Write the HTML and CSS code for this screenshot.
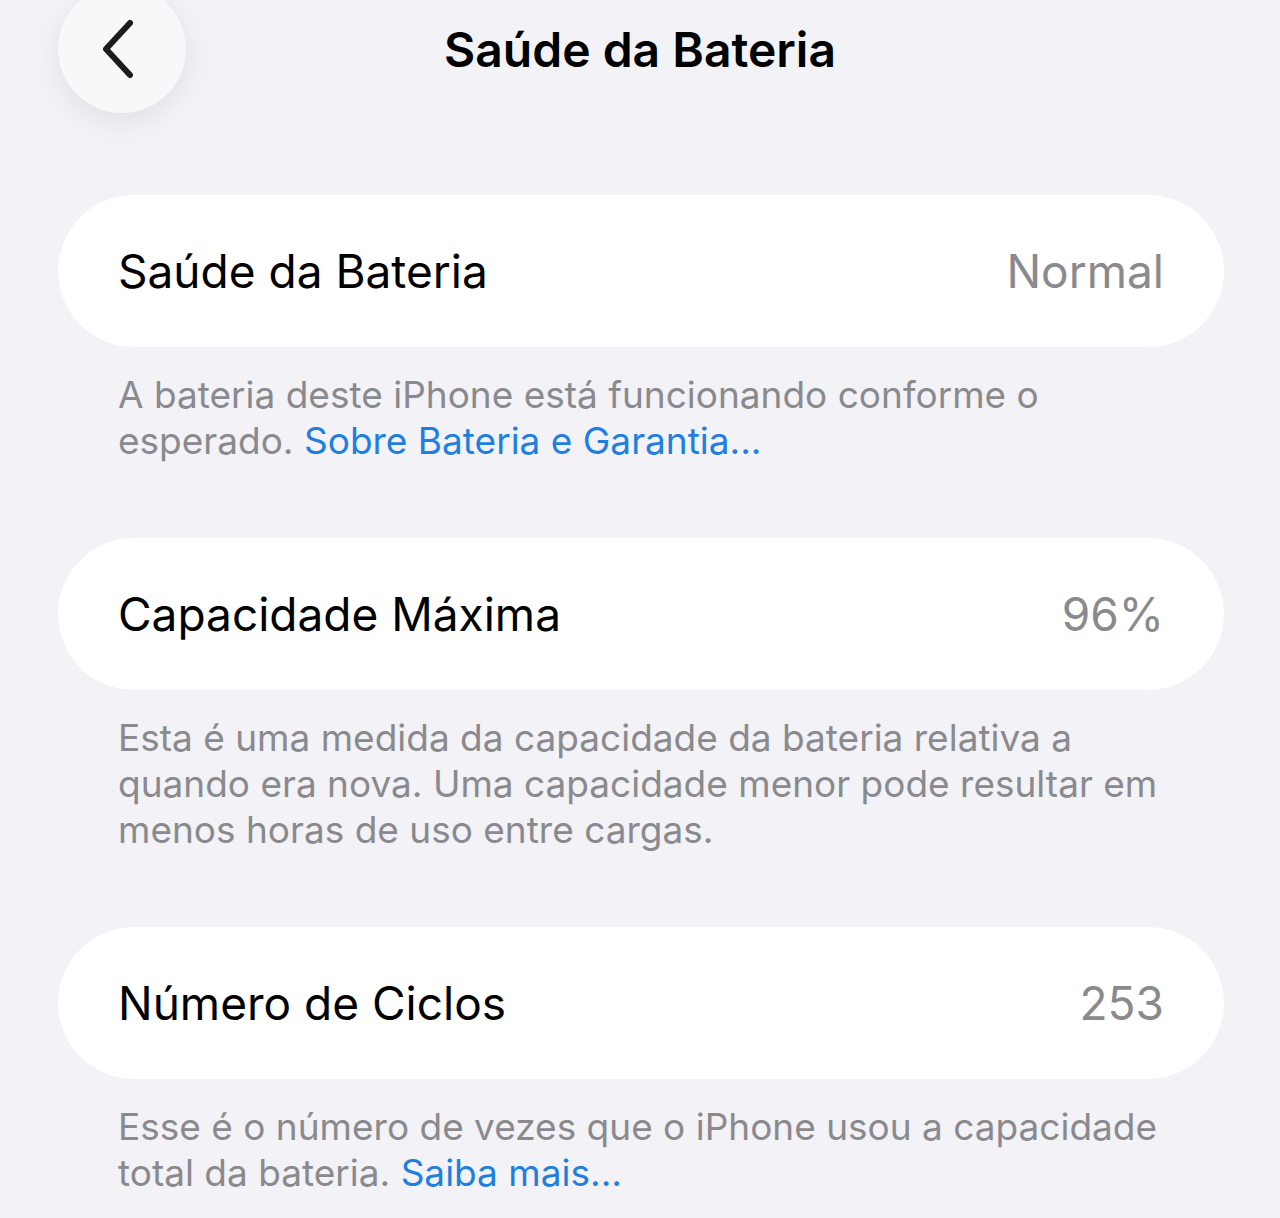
FILE: index.html
```html
<!DOCTYPE html>
<html lang="pt-BR">
     <head>
          <meta charset="UTF-8">
          <meta name="viewport" content="width=device-width, initial-scale=1.0">
          <title>Saúde da Bateria</title>
          <link rel="stylesheet" href="styles.css">
     </head>
     <body>
          <div class="header">
               <div class="back-btn">
                    <svg width="34" height="60" viewBox="0 0 34 60">
                         <path d="M29 4 L5 30 L29 56" fill="none" stroke="#1c1c1e" stroke-width="6" stroke-linecap="round" stroke-linejoin="round"/>
                    </svg>
               </div>
               <h1>Saúde da Bateria</h1>
               <div></div>
          </div>
          <div class="container">
               <div class="card">
                    <span class="label">Saúde da Bateria</span>
                    <span class="value">Normal</span>
               </div>
               <p class="note">A bateria deste iPhone está funcionando conforme o esperado. <a href="#">Sobre Bateria e Garantia...</a></p>

               <div class="card">
                    <span class="label">Capacidade Máxima</span>
                    <span class="value">96%</span>
               </div>
               <p class="note">Esta é uma medida da capacidade da bateria relativa a quando era nova. Uma capacidade menor pode resultar em menos horas de uso entre cargas.</p>

               <div class="card">
                    <span class="label">Número de Ciclos</span>
                    <span class="value">253</span>
               </div>
               <p class="note">Esse é o número de vezes que o iPhone usou a capacidade total da bateria. <a href="#">Saiba mais...</a></p>
          </div>
     </body>
</html>
```

FILE: styles.css
```css
body {
     font-family: Inter, "Noto Sans", sans-serif;
     background-color: #f2f2f7;
     margin: 0;
     padding: 0;
     overflow: hidden;
}
.header {
     display: grid;
     grid-template-columns: 1fr auto 1fr;
     align-items: center;
     height: 98px;
     padding-left: 58px;
}
.back-btn {
     width: 128px;
     height: 128px;
     margin: -15px 0;
     border-radius: 50%;
     background-color: #f8f8fa;
     box-shadow: 0 8px 30px rgba(0, 0, 0, 0.08);
     display: flex;
     align-items: center;
     justify-content: center;
     padding-right: 9px;
     box-sizing: border-box;
}
h1 {
     margin: 0 0 0 -58px;
     font-size: 48px;
     font-weight: 600;
     color: #000;
}
.container {
     padding: 97px 56px 0 58px;
}
.card {
     display: flex;
     justify-content: space-between;
     align-items: center;
     height: 152px;
     padding: 0 60px;
     background-color: #fff;
     border-radius: 76px;
     font-size: 46px;
}
.label {
     color: #000;
}
.value {
     color: #8a8a8e;
}
.note {
     margin: 25px 0 74px;
     padding: 0 60px;
     font-size: 37px;
     line-height: 46px;
     color: #8a8a8e;
}
.note a {
     color: #1f7fe0;
     text-decoration: none;
}
```
